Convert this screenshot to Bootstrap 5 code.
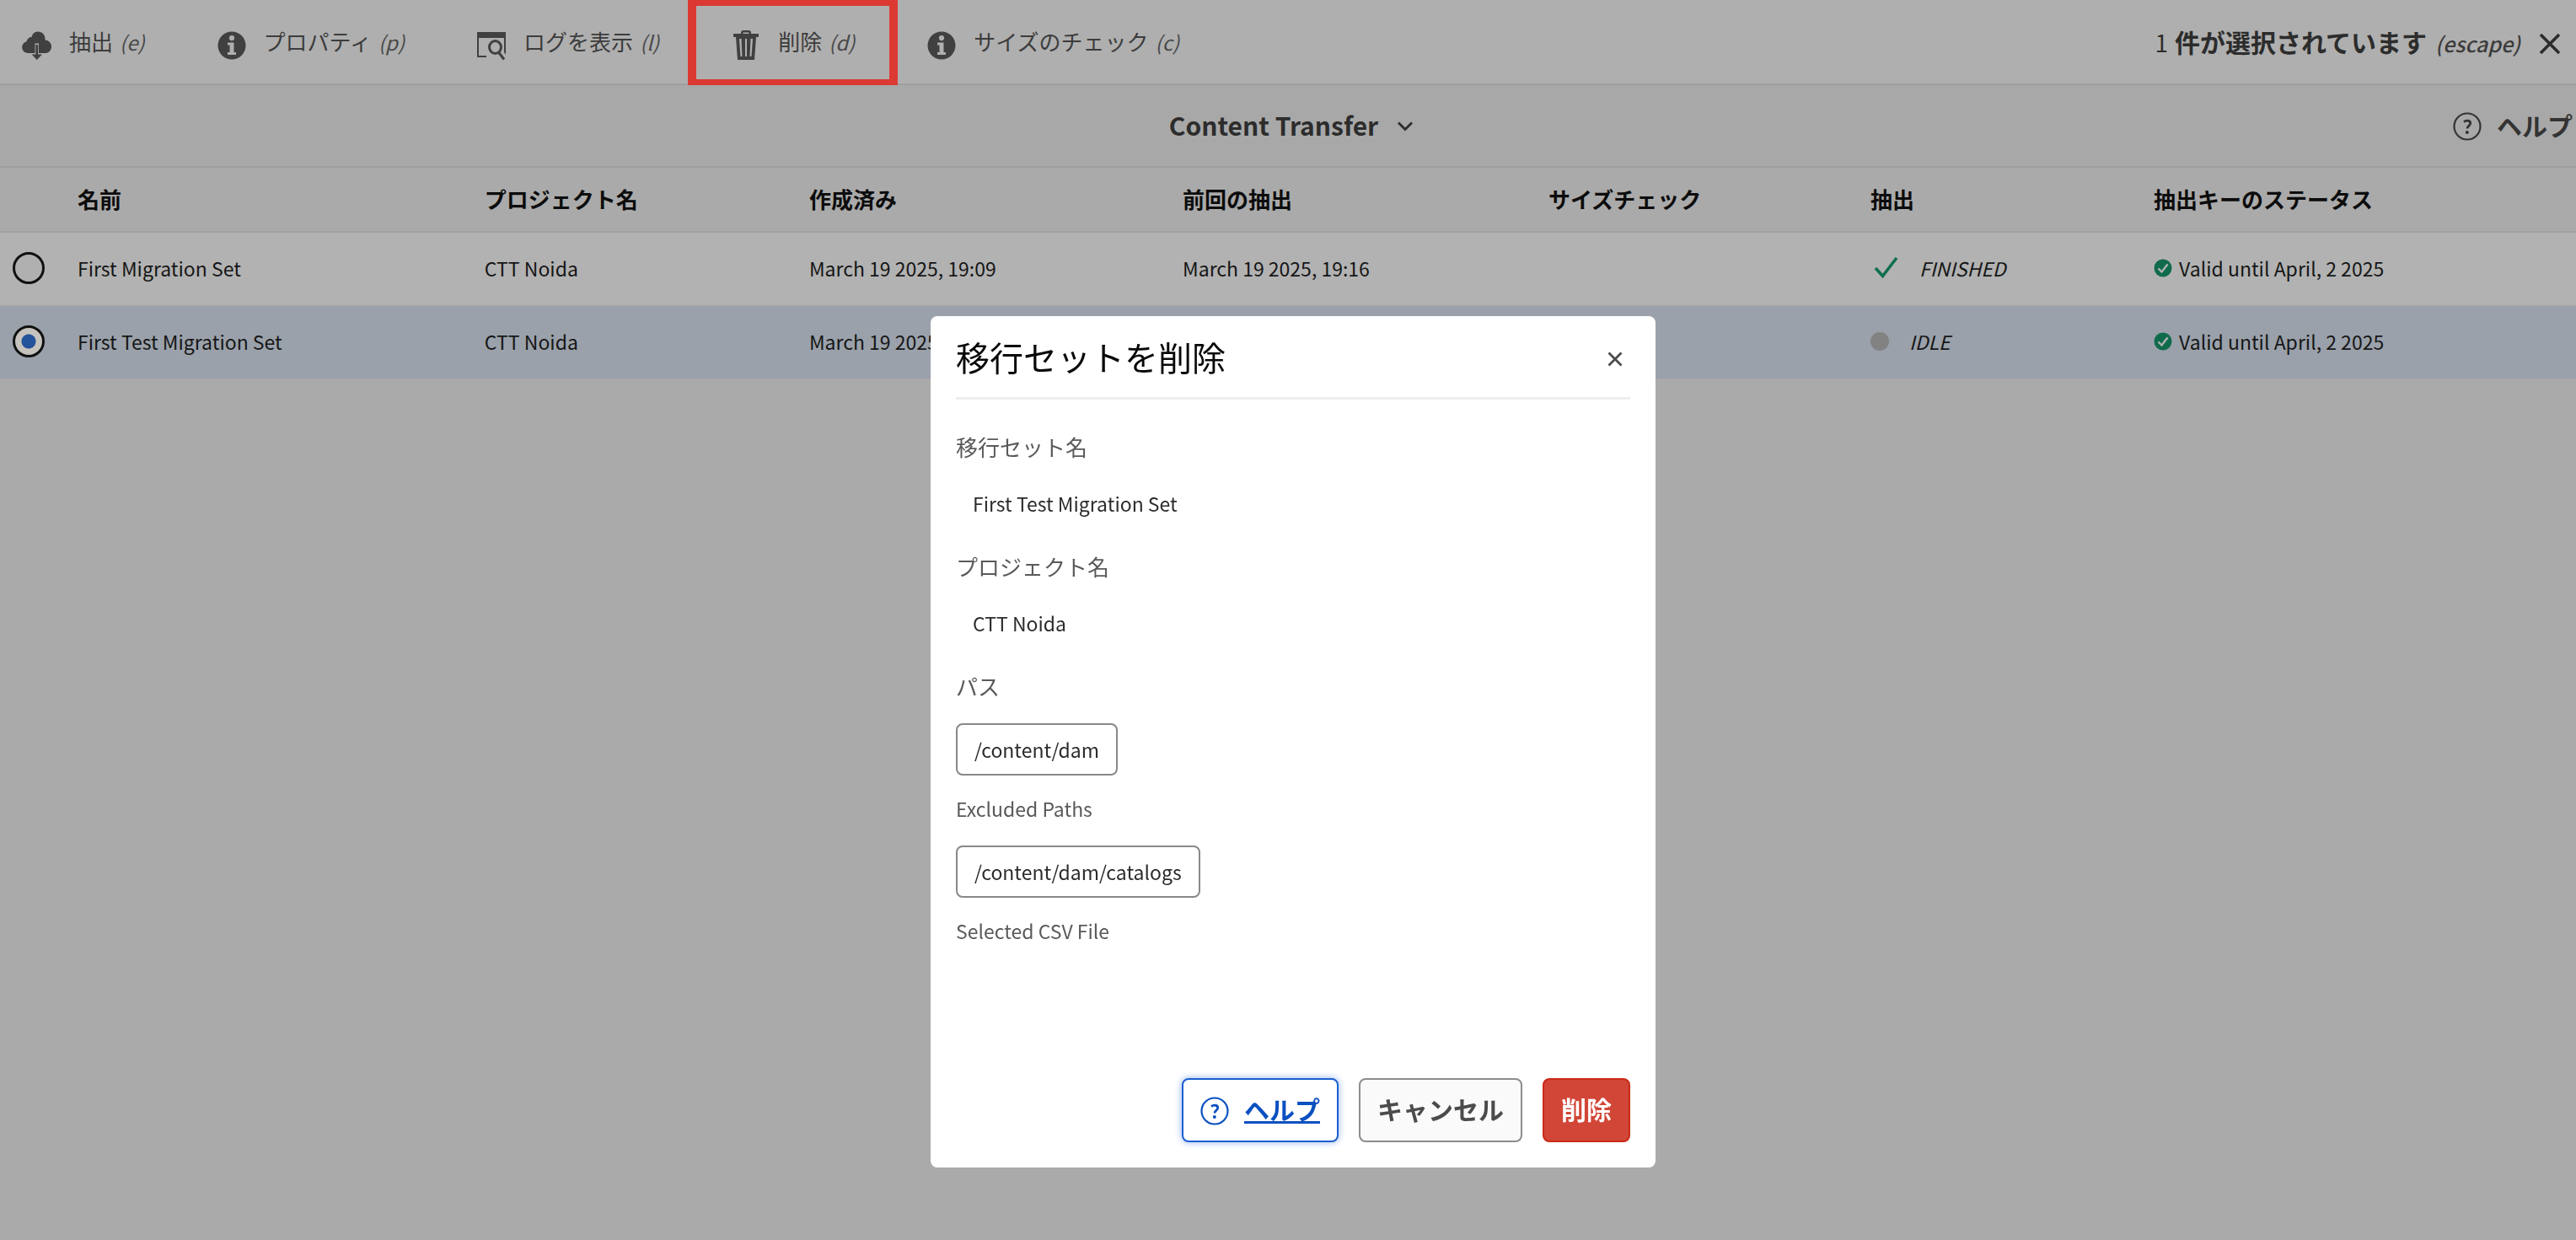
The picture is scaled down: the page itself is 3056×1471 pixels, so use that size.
<!DOCTYPE html>
<html lang="ja">
<head>
<meta charset="utf-8">
<meta name="viewport" content="width=device-width, initial-scale=1">
<title>Content Transfer</title>
<link rel="stylesheet" href="https://cdn.jsdelivr.net/npm/bootstrap@5.3.0/dist/css/bootstrap.min.css">
<style>
  body { font-family: "Noto Sans CJK JP", "Noto Sans", sans-serif; font-size: 23px; line-height: 36px; color: #161616; background: #aaa; }
  .action-bar { height: 101px; padding: 0 18px 0 26px; background: #afafaf; border-bottom: 2px solid #9e9e9e; }
  .action-list { gap: 85px; }
  .action-item { gap: 20px; font-size: 26px; color: #3c3c3c; }
  .action-item svg { width: 36px; height: 36px; margin-top: 8px; fill: #404040; }
  .shortcut { font-size: 24px; margin-left: 8px; color: #484848; }
  .marked { position: relative; }
  .marked::after { content: ""; position: absolute; inset: -31px -51px -32px; border: 10px solid #dc3933; pointer-events: none; }
  .selection { gap: 22px; font-size: 30px; color: #2c2c2c; }
  .selection .count-num { font-size: 28px; margin-right: 8px; }
  .selection .shortcut { font-size: 25px; font-weight: 500; margin-left: 10px; color: #3c3c3c; }
  .title-bar { height: 98px; padding-bottom: 2px; background: #a8a8a8; border-bottom: 2px solid #9e9e9e; color: #2c2c2c; }
  .product { font-size: 30px; gap: 22px; margin-left: 8px; }
  .bar-help { font-size: 30px; gap: 18px; right: 4px; color: #333; }
  .bar-help svg { margin-top: 4px; }
  .set-table { table-layout: fixed; margin: 0; line-height: 32px; }
  .set-table > :not(caption) > * > * { padding: 0 0 2px 24px; background: transparent; color: #161616; border-bottom: 1px solid #a6a6a6; white-space: nowrap; vertical-align: middle; box-shadow: none; }
  .set-table thead th { height: 76px; border-bottom: 2px solid #a2a2a2; font-size: 26px; color: #0c0c0c; }
  .set-table tbody td { height: 87px; background: #b2b2b2; }
  .set-table tbody .chosen td { background: #9aa1aa; }
  .set-table .pick { padding: 0 0 2px 15px; }
  .w-pick { width: 68px; } .w-name { width: 15.8%; } .w-project { width: 12.6%; }
  .w-created { width: 14.5%; } .w-last { width: 14.2%; } .w-size { width: 12.5%; } .w-extract { width: 11%; }
  .set-radio { appearance: none; display: block; width: 38px; height: 38px; margin: 0; border: 3px solid #111; border-radius: 50%; background: #b0b0b0; }
  .set-radio:checked { background: radial-gradient(circle, #24529b 8px, #c6c3be 9px); }
  .idle-dot { width: 22px; height: 22px; border-radius: 50%; background: #828282; }
  .dialog-layer { padding-left: 12px; overflow: hidden; }
  .delete-dialog { max-width: 860px; margin: 375px auto 0; }
  .delete-box { min-height: 1010px; border: 0; border-radius: 8px; padding: 0 30px 30px; }
  .delete-head { height: 99px; border-bottom: 3px solid #eee; padding: 0; }
  .delete-title { font-size: 40px; line-height: 48px; font-weight: 400; color: #080808; }
  .delete-head .close-x { margin: 6px 8px 0 0; }
  .delete-body { padding: 38px 0 0; color: #2c2c2c; }
  .field-label { font-size: 26px; color: #5a5a5a; }
  .latin-label { font-size: 23px; }
  .field-value { margin: 31px 0 39px; padding-left: 20px; }
  .path-chip { height: 62px; padding: 0 20px; border: 2px solid #888; border-radius: 8px; margin: 26px 0 21px; }
  .delete-foot { gap: 24px; }
  .dlg-btn { height: 76px; padding: 0 20px 4px; border-width: 2px; border-radius: 8px; font-size: 30px; font-weight: 700; }
  .dlg-help, .dlg-help:hover { gap: 18px; color: #0a50c0; border-color: #1c5fd0; background: #fff; box-shadow: 0 0 8px #8fb2ee; }
  .dlg-help svg { margin-top: 6px; }
  .dlg-cancel { color: #4b4b4b; border-color: #8c8c8c; background: #fafafa; }
  .dlg-delete { color: #fff; border-color: #ca2a18; background: #d24637; }
  .bare { padding: 0; border: 0; background: none; }
</style>
<script src="https://cdn.jsdelivr.net/npm/bootstrap@5.3.0/dist/js/bootstrap.bundle.min.js"></script>
</head>
<body>
<svg width="0" height="0" class="position-absolute" aria-hidden="true">
  <symbol id="i-info" viewBox="0 0 36 36"><path fill-rule="evenodd" d="M18 1.500a16.500 16.500 0 1 0 0 33 16.500 16.500 0 0 0 0-33zM18 6a3 3 0 1 1 0 6.200A3 3 0 0 1 18 6zM13 14.500h7.500v11.500H23V29H13v-3h2.500v-8.500H13z"/></symbol>
  <symbol id="i-help" viewBox="0 0 34 34"><circle cx="17" cy="17" r="15.500" fill="none" stroke="currentColor" stroke-width="2.200"/><path d="M13 11.500q1.800-1.300 4-1.300 3.700 0 3.700 3 0 1.600-1.900 3.100-1.800 1.400-1.800 3.200" fill="none" stroke="currentColor" stroke-width="2.800"/><circle cx="16.800" cy="24" r="2" fill="currentColor"/></symbol>
  <symbol id="i-valid" viewBox="0 0 22 22"><circle cx="11" cy="11" r="10.500" fill="#106b4c"/><path d="M5.500 11.500l4 4L16.500 6.500" fill="none" stroke="#b2b2b2" stroke-width="2.400"/></symbol>
</svg>

<header class="action-bar d-flex align-items-center justify-content-between">
  <div class="action-list d-flex align-items-center">
    <button type="button" class="action-item bare d-flex align-items-center">
      <svg viewBox="0 0 36 36" aria-hidden="true"><path d="M15.500 27H7a7 7 0 0 1-1.500-13.800A6 6 0 0 1 11.500 8 8 8 0 0 1 19 1.500c4.800 0 8.500 3.500 8.500 8.500v1.500A7.800 7.800 0 0 1 28.500 27H20V15.500h-4.500z"/><path d="M16.400 17h2.800v11.500H24L17.800 35 11.600 28.500h4.800z"/></svg>
      <span>抽出<i class="shortcut">(e)</i></span></button>
    <button type="button" class="action-item bare d-flex align-items-center">
      <svg aria-hidden="true"><use href="#i-info"/></svg>
      <span>プロパティ<i class="shortcut">(p)</i></span></button>
    <button type="button" class="action-item bare d-flex align-items-center">
      <svg viewBox="0 0 36 36" aria-hidden="true"><path d="M1 2h34v27l-2-3V9H3v21h9v2H1z"/><path fill="none" stroke="#404040" stroke-width="3" d="M29.500 20a7 7.500 0 1 1-14 0 7 7.500 0 1 1 14 0zM26.500 26l6.500 8.500"/></svg>
      <span>ログを表示<i class="shortcut">(l)</i></span></button>
    <button type="button" class="action-item marked bare d-flex align-items-center">
      <svg viewBox="0 0 36 36" aria-hidden="true"><path fill-rule="evenodd" d="M12 3q0-3 3-3h6q3 0 3 3v1h9v4H30l-2 27H8L6 8H3V4h9zm2.500 1h7V2.500h-7zM10 10l1.500 21h2L12.500 10zm7 0v21h2V10zm6.500 0l-1 21h2L26 10z"/></svg>
      <span>削除<i class="shortcut">(d)</i></span></button>
    <button type="button" class="action-item bare d-flex align-items-center">
      <svg aria-hidden="true"><use href="#i-info"/></svg>
      <span>サイズのチェック<i class="shortcut">(c)</i></span></button>
  </div>
  <button type="button" class="selection bare d-flex align-items-center">
    <span><span class="count-num">1</span><b>件が選択されています</b><i class="shortcut">(escape)</i></span>
    <svg class="mt-1" width="26" height="26" viewBox="0 0 26 26" aria-hidden="true"><path d="M2 2l22 22M24 2L2 24" stroke="#2c2c2c" stroke-width="3.600"/></svg>
  </button>
</header>

<div class="title-bar position-relative d-flex align-items-center justify-content-center">
  <button type="button" class="product bare fw-bold d-flex align-items-center text-reset">Content Transfer
    <svg class="mt-1" width="20" height="14" viewBox="0 0 20 14" aria-hidden="true"><path d="M2 2.500l8 8 8-8" fill="none" stroke="#2c2c2c" stroke-width="2.800"/></svg></button>
  <a href="#" class="bar-help position-absolute d-flex align-items-center fw-bold text-decoration-none">
    <svg width="34" height="34" aria-hidden="true"><use href="#i-help"/></svg>ヘルプ</a>
</div>

<table class="table set-table">
  <colgroup><col class="w-pick"><col class="w-name"><col class="w-project"><col class="w-created"><col class="w-last"><col class="w-size"><col class="w-extract"><col></colgroup>
  <thead><tr><th></th><th>名前</th><th>プロジェクト名</th><th>作成済み</th><th>前回の抽出</th><th>サイズチェック</th><th>抽出</th><th>抽出キーのステータス</th></tr></thead>
  <tbody>
    <tr>
      <td class="pick"><input class="set-radio" type="radio" name="migrationSet" id="set1"></td>
      <td><label for="set1">First Migration Set</label></td><td>CTT Noida</td><td>March 19 2025, 19:09</td><td>March 19 2025, 19:16</td><td></td>
      <td><span class="d-flex align-items-center"><svg class="ms-1 me-4" width="30" height="28" viewBox="0 0 30 28" aria-hidden="true"><path d="M2 14l8.500 9.500L27 2" fill="none" stroke="#0f6f4e" stroke-width="3.600"/></svg><i>FINISHED</i></span></td>
      <td><span class="d-flex align-items-center gap-2"><svg width="22" height="22" aria-hidden="true"><use href="#i-valid"/></svg>Valid until April, 2 2025</span></td>
    </tr>
    <tr class="chosen">
      <td class="pick"><input class="set-radio" type="radio" name="migrationSet" id="set2" checked></td>
      <td><label for="set2">First Test Migration Set</label></td><td>CTT Noida</td><td>March 19 2025, 19:09</td><td></td><td></td>
      <td><span class="d-flex align-items-center"><span class="idle-dot me-4"></span><i>IDLE</i></span></td>
      <td><span class="d-flex align-items-center gap-2"><svg width="22" height="22" aria-hidden="true"><use href="#i-valid"/></svg>Valid until April, 2 2025</span></td>
    </tr>
  </tbody>
</table>

<div class="modal d-block dialog-layer" role="dialog" aria-modal="true" aria-labelledby="dlgTitle">
  <div class="modal-dialog delete-dialog">
    <div class="modal-content delete-box">
      <div class="modal-header delete-head">
        <h1 class="modal-title delete-title" id="dlgTitle">移行セットを削除</h1>
        <button type="button" class="close-x bare d-flex" aria-label="閉じる"><svg width="20" height="20" viewBox="0 0 20 20" aria-hidden="true"><path d="M2.500 2.500l15 15M17.500 2.500l-15 15" stroke="#4b4b4b" stroke-width="2.800"/></svg></button>
      </div>
      <div class="modal-body delete-body">
        <div class="field-label">移行セット名</div>
        <div class="field-value">First Test Migration Set</div>
        <div class="field-label">プロジェクト名</div>
        <div class="field-value">CTT Noida</div>
        <div class="field-label">パス</div>
        <div class="d-flex"><div class="path-chip d-flex align-items-center">/content/dam</div></div>
        <div class="field-label latin-label">Excluded Paths</div>
        <div class="d-flex"><div class="path-chip d-flex align-items-center">/content/dam/catalogs</div></div>
        <div class="field-label latin-label">Selected CSV File</div>
      </div>
      <div class="delete-foot d-flex justify-content-end">
        <a href="#" class="btn dlg-btn dlg-help d-flex align-items-center"><svg width="34" height="34" aria-hidden="true"><use href="#i-help"/></svg><span class="text-decoration-underline">ヘルプ</span></a>
        <button type="button" class="btn dlg-btn dlg-cancel">キャンセル</button>
        <button type="button" class="btn dlg-btn dlg-delete">削除</button>
      </div>
    </div>
  </div>
</div>
</body>
</html>
